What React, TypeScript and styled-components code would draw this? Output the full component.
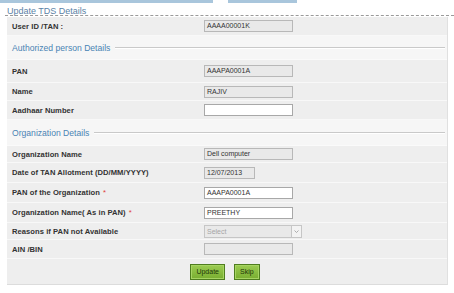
import React from 'react';
import styled, { createGlobalStyle } from 'styled-components';

const GlobalStyle = createGlobalStyle`
    body {
        margin: 0;
        background: #ffffff;
        font-family: 'Liberation Sans', Arial, sans-serif;
    }
`;

const Page = styled.div`
    width: 454px;
    height: 293px;
    overflow: hidden;
`;

const TabStrip = styled.div`
    display: flex;
    gap: 15px;
    height: 3px;
`;

const Tab = styled.div<{ $w: number }>`
    width: ${(p) => p.$w}px;
    background: #a9c6dc;
`;

const Title = styled.div`
    margin-left: 5px;
    padding-left: 2px;
    height: 12px;
    line-height: 16px;
    font-size: 9px;
    color: #5b82a6;
    border-bottom: 1px dashed #9a9a9a;
`;

const Panel = styled.div`
    margin: 1px 0 0 7px;
    width: 440px;
    background: #eeeeee;
    border-right: 1px solid #e0e0e0;
    border-bottom: 1px solid #dcdcdc;
`;

const Row = styled.div<{ $h: number }>`
    display: grid;
    grid-template-columns: 197px 1fr;
    align-items: center;
    height: ${(p) => p.$h}px;
    box-sizing: border-box;
    border-bottom: 1px solid #f8f8f8;
`;

const Label = styled.div`
    padding-left: 5px;
    font-size: 7.6px;
    font-weight: bold;
    letter-spacing: 0.05px;
    color: #333333;
`;

const Star = styled.span`
    color: #e0403a;
    font-weight: normal;
    margin-left: 3px;
`;

const Section = styled.div<{ $h: number }>`
    display: flex;
    align-items: center;
    gap: 5px;
    height: ${(p) => p.$h}px;
    padding: 0 2px 0 5px;
    background: #f6f6f6;
    border-bottom: 1px solid #fafafa;
    box-sizing: border-box;
`;

const Legend = styled.span`
    font-size: 8.6px;
    color: #4a84b4;
    white-space: nowrap;
`;

const Rule = styled.div`
    flex: 1;
    height: 1px;
    background: #c9c9c9;
    box-shadow: 0 1px 0 #ffffff;
`;

const Field = styled.div<{ $w?: number; $off?: boolean }>`
    width: ${(p) => p.$w ?? 89}px;
    height: 12px;
    box-sizing: border-box;
    border: 1px solid ${(p) => (p.$off ? '#b8b8b8' : '#a8a8a8')};
    background: ${(p) => (p.$off ? '#e9e9e9' : '#ffffff')};
    font-size: 7px;
    line-height: 10px;
    padding-left: 2px;
    color: #333333;
`;

const Select = styled.div`
    display: flex;
    width: 98px;
    height: 13px;
    box-sizing: border-box;
    border: 1px solid #c6c6c6;
    background: #e9e9e9;
    font-size: 7px;
    line-height: 11px;
    color: #a6a6a6;
`;

const SelectText = styled.span`
    flex: 1;
    padding-left: 2px;
`;

const Arrow = styled.span`
    width: 9px;
    border-left: 1px solid #c6c6c6;
    background: #f3f3f3;
    display: flex;
    align-items: center;
    justify-content: center;
`;

const Buttons = styled.div`
    display: flex;
    justify-content: center;
    align-items: center;
    gap: 9px;
    height: 25px;
    padding-right: 4px;
`;

const Button = styled.button`
    height: 16px;
    padding: 0 5px;
    border: 1px solid #4f7d1f;
    box-shadow: inset 0 0 0 1px #a6d462;
    background: linear-gradient(#9ccc52, #78ad30);
    font-family: 'Liberation Sans', Arial, sans-serif;
    font-size: 7px;
    color: #1d3608;
    cursor: pointer;
`;

type Item = { label: string; h: number; value?: string; w?: number; off?: boolean; star?: boolean };

const person: Item[] = [
    { label: 'PAN', h: 23, value: 'AAAPA0001A', off: true },
    { label: 'Name', h: 18, value: 'RAJIV', off: true },
    { label: 'Aadhaar Number', h: 19 },
];

const org: Item[] = [
    { label: 'Organization Name', h: 17, value: 'Dell computer', off: true },
    { label: 'Date of TAN Allotment (DD/MM/YYYY)', h: 20, value: '12/07/2013', w: 51, off: true },
    { label: 'PAN of the Organization', h: 20, value: 'AAAPA0001A', star: true },
    { label: 'Organization Name( As in PAN)', h: 20, value: 'PREETHY', star: true },
];

const FieldRow = ({ item }: { item: Item }) => (
    <Row $h={item.h}>
        <Label>
            {item.label}
            {item.star && <Star>*</Star>}
        </Label>
        <Field $w={item.w} $off={item.off}>{item.value}</Field>
    </Row>
);

const App = () => {
    return (
        <Page>
            <GlobalStyle />
            <TabStrip>
                <Tab $w={213} />
                <Tab $w={69} />
            </TabStrip>
            <Title>Update TDS Details</Title>
            <Panel>
                <Row $h={19}>
                    <Label>User ID /TAN :</Label>
                    <Field $off>AAAA00001K</Field>
                </Row>
                <Section $h={24}>
                    <Legend>Authorized person Details</Legend>
                    <Rule />
                </Section>
                {person.map((item) => (
                    <FieldRow key={item.label} item={item} />
                ))}
                <Section $h={26}>
                    <Legend>Organization Details</Legend>
                    <Rule />
                </Section>
                {org.map((item) => (
                    <FieldRow key={item.label} item={item} />
                ))}
                <Row $h={17}>
                    <Label>Reasons if PAN not Available</Label>
                    <Select>
                        <SelectText>Select</SelectText>
                        <Arrow>
                            <svg width="5" height="3" viewBox="0 0 5 3">
                                <path d="M0.5 0.5 L2.5 2.5 L4.5 0.5" fill="none" stroke="#9a9a9a" strokeWidth="0.8" />
                            </svg>
                        </Arrow>
                    </Select>
                </Row>
                <Row $h={19}>
                    <Label>AIN /BIN</Label>
                    <Field $off />
                </Row>
                <Buttons>
                    <Button>Update</Button>
                    <Button>Skip</Button>
                </Buttons>
            </Panel>
        </Page>
    );
};

export default App;
